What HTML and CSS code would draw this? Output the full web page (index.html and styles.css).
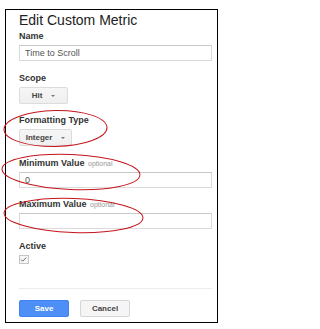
FILE: index.html
```html
<!DOCTYPE html>
<html>
<head>
<meta charset="utf-8">
<link rel="stylesheet" href="styles.css">
</head>
<body>
<div class="frame">
  <h1 class="title">Edit Custom Metric</h1>
  <div class="field">
    <div class="label">Name</div>
    <div class="input">Time to Scroll</div>
  </div>
  <div class="field">
    <div class="label">Scope</div>
    <div class="select select-hit"><span>Hit</span><span class="arrow"></span></div>
  </div>
  <div class="field">
    <div class="label">Formatting Type</div>
    <div class="select select-int"><span>Integer</span><span class="arrow"></span></div>
  </div>
  <div class="field">
    <div class="label">Minimum Value <span class="opt">optional</span></div>
    <div class="input">0</div>
  </div>
  <div class="field">
    <div class="label">Maximum Value <span class="opt">optional</span></div>
    <div class="input"></div>
  </div>
  <div class="field">
    <div class="label">Active</div>
    <div class="checkbox">
      <svg width="10" height="9" viewBox="0 0 10 9"><path d="M2.2 4.6 L4 6.4 L8 2.4" fill="none" stroke="#555" stroke-width="1"/></svg>
    </div>
  </div>
  <div class="divider"></div>
  <div class="actions">
    <div class="btn btn-save">Save</div>
    <div class="btn btn-cancel">Cancel</div>
  </div>
</div>
<svg class="notes" width="225" height="329" viewBox="0 0 225 329">
  <ellipse cx="55.5" cy="128.5" rx="51.5" ry="18" transform="rotate(-1 55.5 128.5)" fill="none" stroke="#c4141c" stroke-width="1"/>
  <ellipse cx="71" cy="172" rx="69" ry="17.5" transform="rotate(2.5 71 172)" fill="none" stroke="#c4141c" stroke-width="1"/>
  <ellipse cx="73.5" cy="215.5" rx="69.5" ry="17" transform="rotate(2 73.5 215.5)" fill="none" stroke="#c4141c" stroke-width="1"/>
</svg>
</body>
</html>
```
FILE: styles.css
```css
html, body {
  margin: 0;
  padding: 0;
  background: #fff;
}
body {
  position: relative;
  width: 225px;
  height: 329px;
  overflow: hidden;
  font-family: "Liberation Sans", Arial, sans-serif;
}
.frame {
  box-sizing: border-box;
  margin: 9px 0 0 5px;
  width: 213px;
  height: 314px;
  border: 1px solid #000;
  padding: 2px 5px 0 13px;
}
.title {
  margin: 0;
  font-size: 14px;
  font-weight: normal;
  line-height: 16px;
  color: #222;
}
.field {
  margin-top: 11.5px;
}
.field:first-of-type {
  margin-top: 3px;
}
.label {
  font-size: 9px;
  font-weight: bold;
  line-height: 11px;
  color: #333;
  margin-bottom: 3px;
}
.opt {
  font-size: 7px;
  font-weight: normal;
  color: #999;
  margin-left: 1px;
}
.input {
  box-sizing: border-box;
  width: 193px;
  height: 16px;
  border: 1px solid #dadada;
  border-top-color: #c8c8c8;
  padding-left: 5px;
  font-size: 9px;
  line-height: 14px;
  color: #555;
}
.select {
  box-sizing: border-box;
  display: flex;
  align-items: center;
  justify-content: center;
  gap: 9px;
  height: 17px;
  border: 1px solid #dcdcdc;
  border-radius: 2px;
  background: linear-gradient(#f6f6f6, #efefef);
  font-size: 8px;
  font-weight: bold;
  color: #444;
}
.select-hit { width: 49px; }
.select-int { width: 53px; }
.arrow {
  width: 0;
  height: 0;
  border-left: 2px solid transparent;
  border-right: 2px solid transparent;
  border-top: 2px solid #777;
  margin-top: 1px;
}
.checkbox {
  box-sizing: border-box;
  width: 10px;
  height: 9px;
  margin-top: 1.5px;
  border: 1px solid #c6c6c6;
  background: #f7f7f7;
  display: flex;
}
.checkbox svg {
  margin: -1px 0 0 -1px;
}
.divider {
  margin-top: 24px;
  width: 193px;
  height: 1px;
  background: #ececec;
}
.actions {
  display: flex;
  gap: 11px;
  margin-top: 11px;
}
.btn {
  box-sizing: border-box;
  width: 50px;
  height: 17px;
  border-radius: 2px;
  font-size: 8px;
  font-weight: bold;
  line-height: 15px;
  text-align: center;
}
.btn-save {
  background: #4d8ff6;
  border: 1px solid #3f82ef;
  color: #fff;
}
.btn-cancel {
  background: #f5f5f5;
  border: 1px solid #d6d6d6;
  color: #444;
}
.notes {
  position: absolute;
  left: 0;
  top: 0;
  pointer-events: none;
}
```
